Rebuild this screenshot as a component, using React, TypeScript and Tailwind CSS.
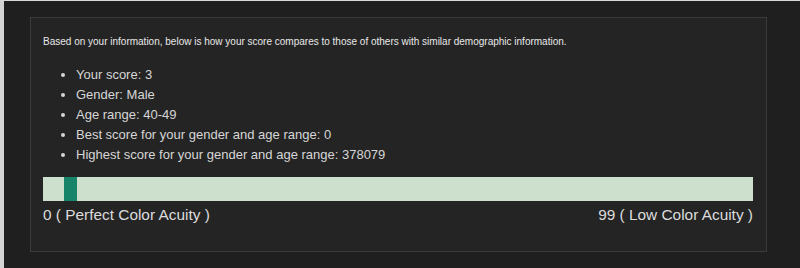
import React from 'react';

const info = [
  'Your score: 3',
  'Gender: Male',
  'Age range: 40-49',
  'Best score for your gender and age range: 0',
  'Highest score for your gender and age range: 378079',
];

export default function App() {
  return (
    <div className="w-[800px] h-[268px] bg-[#1f1f1f] border-t border-t-[#d9d9d9] border-l-[4px] border-l-[#d4d4d4] pl-[26px] pt-[16px] font-['Liberation_Sans',Arial,sans-serif]">
      <div className="w-[737px] h-[235px] bg-[#242424] border border-[#3a3a3a] pl-[12px] pr-[12px] pt-[18px]">
        <p className="text-[10px] leading-[12px] text-[#e8e8e8]">
          Based on your information, below is how your score compares to those of others with similar demographic information.
        </p>
        <ul className="mt-[17px] pl-[33px] list-disc text-[13px] leading-[20px] text-[#d6d6d6] marker:text-[#d6d6d6]">
          {info.map((t) => (
            <li key={t}>{t}</li>
          ))}
        </ul>
        <div className="mt-[12px] h-[24px] w-[710px] bg-[#cde0cd] pl-[21px]">
          <div className="h-full w-[13px] bg-[#168468]" />
        </div>
        <div className="w-[710px] flex justify-between text-[15.4px] leading-[20px] mt-[4px] text-[#dcdcdc]">
          <span>0 ( Perfect Color Acuity )</span>
          <span>99 ( Low Color Acuity )</span>
        </div>
      </div>
    </div>
  );
}
